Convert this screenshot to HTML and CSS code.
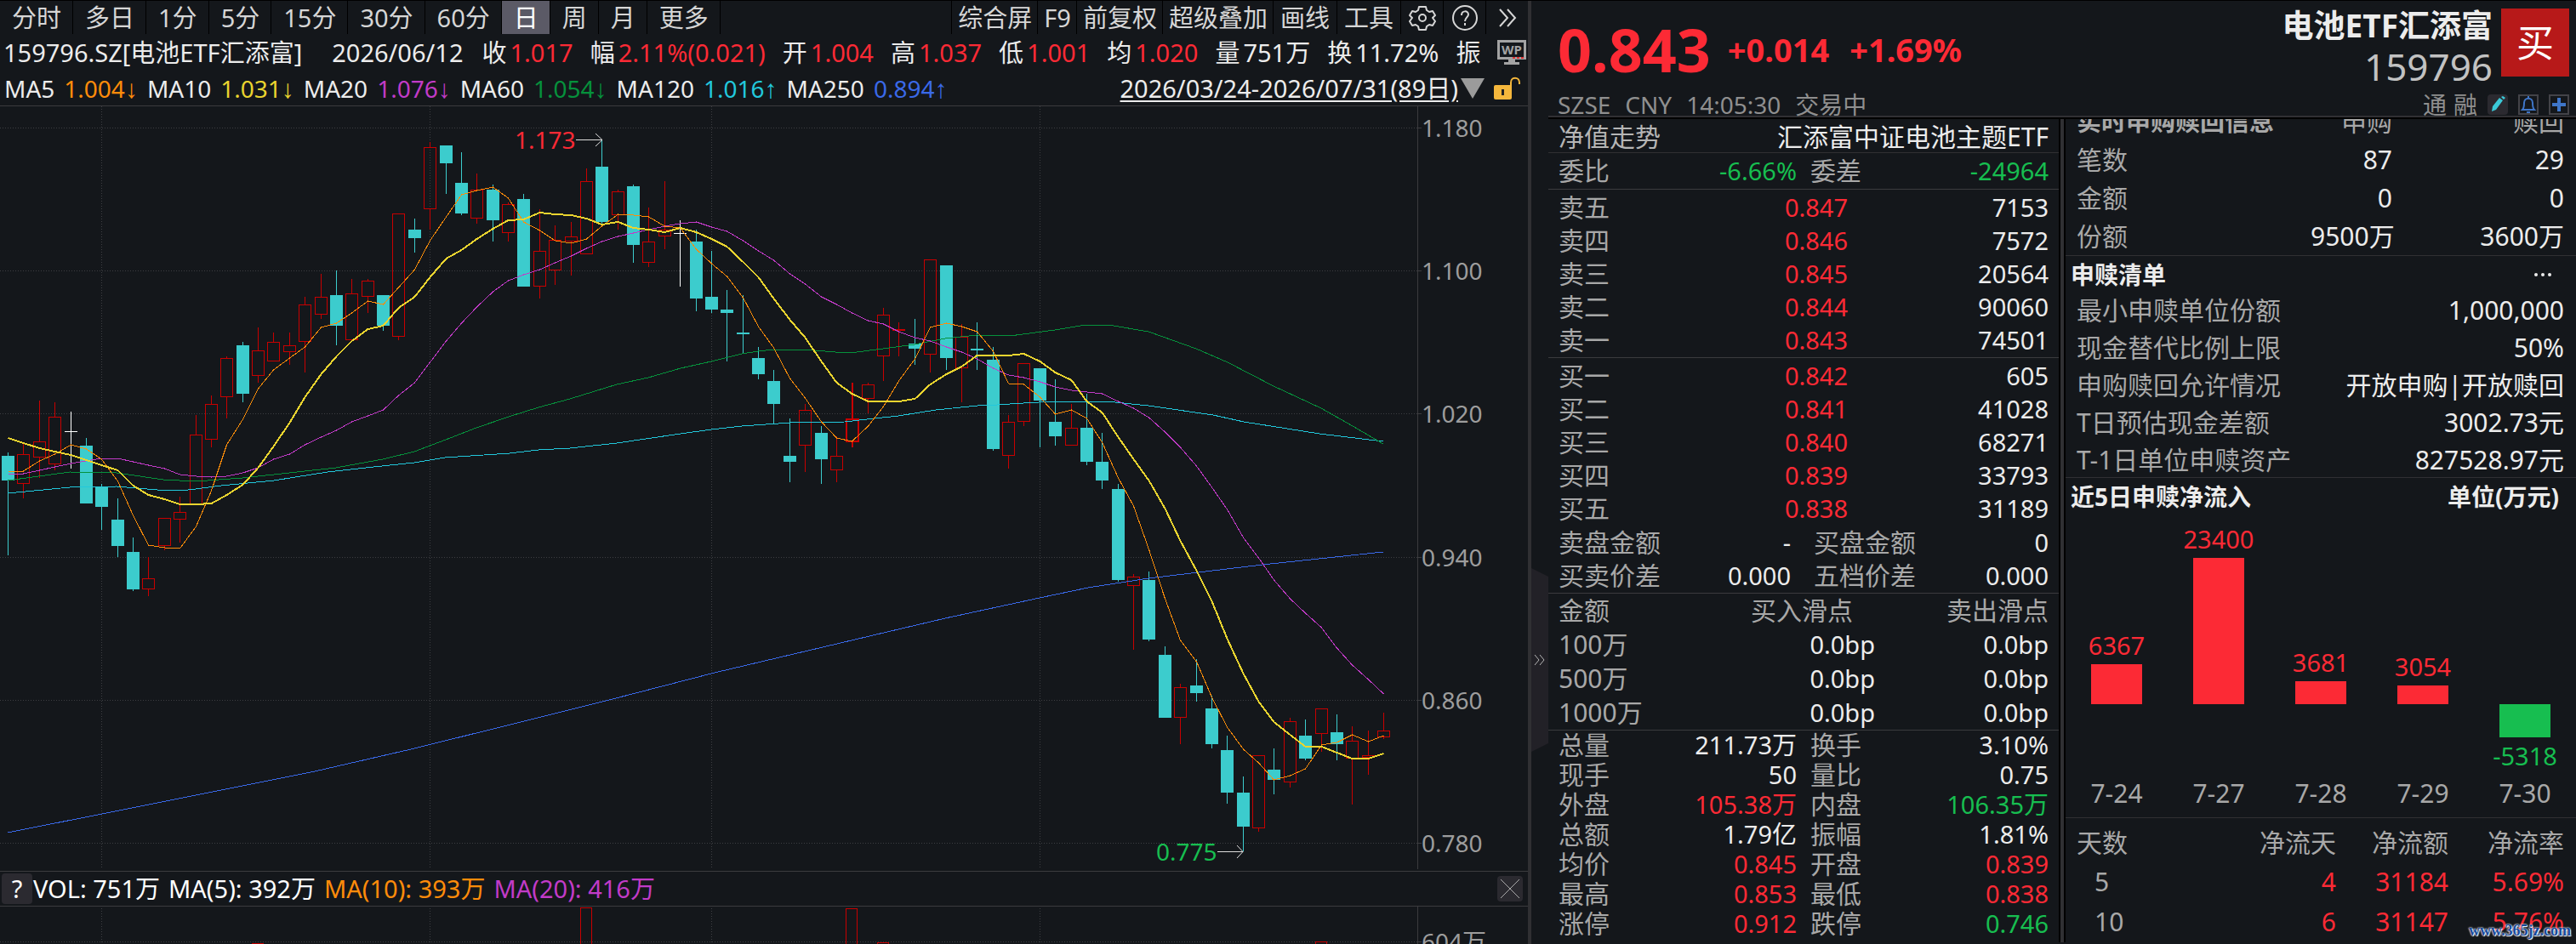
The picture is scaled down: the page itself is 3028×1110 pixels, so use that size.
FILE: index.html
```html
<!DOCTYPE html>
<html lang="zh-CN">
<head>
    <meta charset="UTF-8">
    <meta name="viewport" content="width=device-width, initial-scale=1.0">
    <title>电池ETF汇添富 159796</title>
    <link rel="stylesheet" href="styles.css">
</head>
<body>
    <div class="screen">
        <!-- K线区域 -->
        <main class="chart-panel">
            <nav class="toolbar">
                <div class="periods">
                    <button type="button">分时</button>
                    <button type="button">多日</button>
                    <button type="button">1分</button>
                    <button type="button">5分</button>
                    <button type="button">15分</button>
                    <button type="button">30分</button>
                    <button type="button">60分</button>
                    <button type="button" class="active">日</button>
                    <button type="button">周</button>
                    <button type="button">月</button>
                    <button type="button">更多</button>
                </div>
                <div class="tools">
                    <button type="button">综合屏</button>
                    <button type="button">F9</button>
                    <button type="button">前复权</button>
                    <button type="button">超级叠加</button>
                    <button type="button" class="wide">画线</button>
                    <button type="button" class="wide">工具</button>
                    <button type="button" class="icon-btn" aria-label="设置">
                        <svg width="32" height="32" viewBox="0 0 32 32" fill="none" stroke="currentColor" stroke-width="2" stroke-linejoin="round">
                            <path d="M12 3h8l1 4 3 2 4-1 3 5-3 3 3 4-3 5-4-1-3 2-1 4h-8l-1-4-3-2-4 1-3-5 3-4-3-3 3-5 4 1 3-2z"/>
                            <circle cx="16" cy="16" r="4"/>
                        </svg>
                    </button>
                    <button type="button" class="icon-btn" aria-label="帮助">
                        <svg width="32" height="32" viewBox="0 0 32 32" fill="none" stroke="currentColor" stroke-width="2">
                            <circle cx="16" cy="16" r="14"/>
                            <path d="M12 13c0-6 8-6 8-1 0 3-4 4-4 8M16 22v3"/>
                        </svg>
                    </button>
                    <button type="button" class="icon-btn" aria-label="展开">
                        <svg width="28" height="28" viewBox="0 0 28 28" fill="none" stroke="currentColor" stroke-width="2">
                            <path d="M5 4l9 10-9 10M14 4l9 10-9 10"/>
                        </svg>
                    </button>
                </div>
            </nav>

            <div class="quote-line">
                <span class="security">159796.SZ[电池ETF汇添富]</span>
                <span class="date">2026/06/12</span>
                <span class="field">收<b class="up">1.017</b></span>
                <span class="field">幅<b class="up">2.11%(0.021)</b></span>
                <span class="field">开<b class="up">1.004</b></span>
                <span class="field">高<b class="up">1.037</b></span>
                <span class="field">低<b class="up">1.001</b></span>
                <span class="field">均<b class="up">1.020</b></span>
                <span class="field">量<b>751万</b></span>
                <span class="field">换<b>11.72%</b></span>
                <span class="field">振</span>
                <svg class="wp" width="34" height="32" viewBox="0 0 34 32">
                    <rect x="1.500" y="2.500" width="31" height="20" fill="none" stroke="#a3a3a3" stroke-width="3"/>
                    <path d="M13 24h8v3h5v3H8v-3h5z" fill="#a3a3a3"/>
                    <text x="17" y="18" text-anchor="middle">WP</text>
                    <path d="M18 22h14" stroke="#d33" stroke-width="2" stroke-dasharray="3 2"/>
                </svg>
            </div>

            <div class="ma-line">
                <span>MA5</span><span class="ma5">1.004<i>↓</i></span>
                <span>MA10</span><span class="ma10">1.031<i>↓</i></span>
                <span>MA20</span><span class="ma20">1.076<i>↓</i></span>
                <span>MA60</span><span class="ma60">1.054<i>↓</i></span>
                <span>MA120</span><span class="ma120">1.016<i>↑</i></span>
                <span>MA250</span><span class="ma250">0.894<i>↑</i></span>
                <a class="range" href="#">2026/03/24-2026/07/31(89日)</a>
                <svg class="caret" width="28" height="24" viewBox="0 0 28 24"><path d="M0 0h28L14 24z" fill="#9b9b9b"/></svg>
                <svg class="lock" width="32" height="28" viewBox="0 0 32 28">
                    <path d="M20 12V7c0-7 10-7 10 0v2" fill="none" stroke="#f5b73c" stroke-width="2"/>
                    <rect x="0" y="10" width="21" height="17" rx="2" fill="#f5b73c"/>
                    <path d="M10.500 15v7" stroke="#222" stroke-width="3"/>
                </svg>
            </div>

            <svg id="kline" class="kline" viewBox="0 125 1796 899"></svg>

            <div class="vol-line">
                <button type="button" class="small-btn" aria-label="指标说明">?</button>
                <span>VOL: 751万</span>
                <span>MA(5): 392万</span>
                <span class="ma5">MA(10): 393万</span>
                <span class="ma20">MA(20): 416万</span>
                <button type="button" class="small-btn close" aria-label="关闭">
                    <svg width="24" height="24" viewBox="0 0 24 24" stroke="#aaa" fill="none"><path d="M1 1l22 22M23 1L1 23"/></svg>
                </button>
            </div>
            <svg id="volume" class="volume" viewBox="0 1066 1796 80"></svg>
        </main>

        <!-- 报价区域 -->
        <aside class="side">
            <div class="gutter">
                <button type="button" class="fold" aria-label="收起">
                    <svg width="14" height="14" viewBox="0 0 14 14" fill="none" stroke="#b5b5b5"><path d="M1 1l5 6-5 6M7 1l5 6-5 6"/></svg>
                </button>
            </div>
            <div class="side-body">
                <header class="head">
                    <div class="head-top">
                        <strong class="price">0.843</strong>
                        <strong class="change">+0.014</strong>
                        <strong class="change">+1.69%</strong>
                        <div class="name">
                            <h1>电池ETF汇添富</h1>
                            <span>159796</span>
                        </div>
                        <button type="button" class="buy">买</button>
                    </div>
                    <div class="head-sub">
                        <span>SZSE</span><span>CNY</span><span>14:05:30</span><span>交易中</span>
                        <div class="tags">
                            <span>通</span><span>融</span>
                            <button type="button" class="tag-btn edit" aria-label="编辑">
                                <svg width="24" height="24" viewBox="0 0 24 24"><path d="M14 4l4 3-8 11-5 2 1-6zM16 3l2-1 3 2-2 2z" fill="#3bc9d8"/></svg>
                            </button>
                            <button type="button" class="tag-btn" aria-label="提醒">
                                <svg width="24" height="24" viewBox="0 0 24 24" fill="none" stroke="#3f76c8" stroke-width="2"><path d="M5 18c2-2 2-4 2-8 0-7 10-7 10 0 0 4 0 6 2 8zM10 21h4M12 2v3"/></svg>
                            </button>
                            <button type="button" class="tag-btn" aria-label="添加">
                                <svg width="24" height="24" viewBox="0 0 24 24" stroke="#3f76c8" stroke-width="4"><path d="M12 4v16M4 12h16"/></svg>
                            </button>
                        </div>
                    </div>
                </header>

                <div class="columns">
                    <section class="book">
                        <div class="nav-row"><span>净值走势</span><a href="#">汇添富中证电池主题ETF</a></div>
                        <table class="pairs ratio">
                            <tr><th>委比</th><td class="down">-6.66%</td><th>委差</th><td class="down">-24964</td></tr>
                        </table>
                        <table class="orders">
                            <tr><th>卖五</th><td class="up">0.847</td><td>7153</td></tr>
                            <tr><th>卖四</th><td class="up">0.846</td><td>7572</td></tr>
                            <tr><th>卖三</th><td class="up">0.845</td><td>20564</td></tr>
                            <tr><th>卖二</th><td class="up">0.844</td><td>90060</td></tr>
                            <tr><th>卖一</th><td class="up">0.843</td><td>74501</td></tr>
                        </table>
                        <table class="orders bids">
                            <tr><th>买一</th><td class="up">0.842</td><td>605</td></tr>
                            <tr><th>买二</th><td class="up">0.841</td><td>41028</td></tr>
                            <tr><th>买三</th><td class="up">0.840</td><td>68271</td></tr>
                            <tr><th>买四</th><td class="up">0.839</td><td>33793</td></tr>
                            <tr><th>买五</th><td class="up">0.838</td><td>31189</td></tr>
                        </table>
                        <table class="pairs spread">
                            <tr><th>卖盘金额</th><td>-</td><th>买盘金额</th><td>0</td></tr>
                            <tr><th>买卖价差</th><td>0.000</td><th>五档价差</th><td>0.000</td></tr>
                        </table>
                        <table class="slip">
                            <tr><th>金额</th><th class="buy-slip">买入滑点</th><th>卖出滑点</th></tr>
                            <tr><th>100万</th><td>0.0bp</td><td>0.0bp</td></tr>
                            <tr><th>500万</th><td>0.0bp</td><td>0.0bp</td></tr>
                            <tr><th>1000万</th><td>0.0bp</td><td>0.0bp</td></tr>
                        </table>
                        <table class="pairs stats">
                            <tr><th>总量</th><td>211.73万</td><th>换手</th><td>3.10%</td></tr>
                            <tr><th>现手</th><td>50</td><th>量比</th><td>0.75</td></tr>
                            <tr><th>外盘</th><td class="up">105.38万</td><th>内盘</th><td class="down">106.35万</td></tr>
                            <tr><th>总额</th><td>1.79亿</td><th>振幅</th><td>1.81%</td></tr>
                            <tr><th>均价</th><td class="up">0.845</td><th>开盘</th><td class="up">0.839</td></tr>
                            <tr><th>最高</th><td class="up">0.853</td><th>最低</th><td class="up">0.838</td></tr>
                            <tr><th>涨停</th><td class="up">0.912</td><th>跌停</th><td class="down">0.746</td></tr>
                        </table>
                    </section>

                    <div class="divider"></div>

                    <section class="fund">
                        <table class="realtime">
                            <tr><th class="title">实时申购赎回信息</th><th>申购</th><th>赎回</th></tr>
                            <tr><th>笔数</th><td>87</td><td>29</td></tr>
                            <tr><th>金额</th><td>0</td><td>0</td></tr>
                            <tr><th>份额</th><td>9500万</td><td>3600万</td></tr>
                        </table>
                        <div class="block">
                            <div class="block-title"><h2>申赎清单</h2><button type="button" class="more" aria-label="更多">
                                <svg width="20" height="4" viewBox="0 0 20 4" fill="#ececec"><circle cx="2" cy="2" r="2"/><circle cx="10" cy="2" r="2"/><circle cx="18" cy="2" r="2"/></svg>
                            </button></div>
                            <table class="list">
                                <tr><th>最小申赎单位份额</th><td>1,000,000</td></tr>
                                <tr><th>现金替代比例上限</th><td>50%</td></tr>
                                <tr><th>申购赎回允许情况</th><td>开放申购|开放赎回</td></tr>
                                <tr><th>T日预估现金差额</th><td>3002.73元</td></tr>
                                <tr><th>T-1日单位申赎资产</th><td>827528.97元</td></tr>
                            </table>
                        </div>
                        <div class="block">
                            <div class="block-title"><h2>近5日申赎净流入</h2><h2>单位(万元)</h2></div>
                            <div id="flow" class="flow"></div>
                        </div>
                        <table class="days">
                            <tr><th>天数</th><th>净流天</th><th>净流额</th><th>净流率</th></tr>
                            <tr><th>5</th><td>4</td><td>31184</td><td>5.69%</td></tr>
                            <tr><th>10</th><td>6</td><td>31147</td><td>5.76%</td></tr>
                        </table>
                        <span class="site">www.365jz.com</span>
                    </section>
                </div>
            </div>
        </aside>
    </div>

    <script>
        var STEP = 18.375;
        var FIRST = 9.5;

        // 类型, 实体上沿, 实体下沿, 最高, 最低 (u 阳线, d 阴线, w 十字星)
        var candles = [
            ['d',536,565,532,653],['u',534,568,522,586],['u',519,537,471,562],['u',490,545,473,553],
            ['w',507,507,484,551],['d',524,592,515,592],['d',572,596,569,623],['d',611,642,586,655],
            ['d',649,693,632,695],['u',680,692,655,701],['u',609,641,609,647],['u',602,610,584,638],
            ['u',511,592,488,592],['u',475,516,465,526],['u',421,466,419,492],['d',406,463,402,473],
            ['u',412,441,385,450],['u',402,424,391,424],['u',406,413,391,429],['u',358,401,349,438],
            ['u',349,369,322,375],['d',347,383,318,406],['u',345,399,328,399],['u',330,348,328,368],
            ['d',347,383,347,389],['u',251,395,251,400],['d',270,280,257,297],['u',173,245,167,270],
            ['d',171,192,171,228],['d',215,251,179,253],['u',223,256,204,263],['d',223,259,217,284],
            ['u',240,273,238,284],['d',234,337,228,337],['u',295,336,246,351],['u',282,317,265,335],
            ['u',278,283,261,324],['u',213,298,198,298],['d',196,261,164,265],['u',225,252,223,270],
            ['d',219,288,217,309],['u',284,308,244,314],['u',270,277,213,293],['w',274,274,259,337],
            ['d',284,351,270,366],['d',349,364,295,368],['d',364,368,341,425],['d',391,393,347,416],
            ['d',421,440,408,446],['d',448,475,435,498],['d',536,543,492,567],['u',482,523,475,555],
            ['d',509,540,501,569],['u',536,552,513,567],['x',492,518,450,526],['u',452,468,450,486],
            ['u',370,418,362,448],['u',387,388,379,419],['d',404,410,375,429],['u',305,416,305,438],
            ['d',312,421,312,435],['u',396,432,381,473],['d',410,412,379,435],['d',423,528,408,530],
            ['u',496,535,488,551],['u',427,495,427,501],['d',433,471,433,526],['d',496,513,446,524],
            ['u',503,523,475,523],['d',503,543,463,547],['d',543,565,509,575],['d',575,682,569,684],
            ['u',678,688,675,764],['d',682,752,672,754],['d',770,844,760,844],['u',808,843,804,875],
            ['d',806,815,775,825],['d',833,875,818,880],['d',882,932,865,945],['d',932,972,913,1001],
            ['u',888,973,888,978],['d',905,917,880,934],['u',848,919,844,926],['d',865,892,846,894],
            ['u',833,862,833,884],['d',861,875,840,894],['u',871,891,854,946],['u',888,890,859,911],
            ['u',859,866,838,869]
        ];

        // 每根K线一个点
        var ma5 = [554,554,542,534,523,528,540,566,606,641,644,645,619,577,523,493,457,435,421,408,385,380,368,354,358,338,317,283,255,229,224,220,233,261,271,283,286,281,266,252,253,255,266,268,293,310,325,350,384,409,445,468,496,515,519,501,478,448,422,385,380,384,390,413,451,452,467,487,482,492,520,562,595,646,704,753,778,820,855,881,897,917,912,904,876,873,864,872,865];
        var ma10 = [515,521,527,531,535,541,547,553,571,582,587,593,593,592,582,570,550,525,497,467,440,419,401,387,383,362,349,326,304,294,281,269,259,258,250,252,253,257,264,261,268,270,273,268,273,281,290,308,326,351,376,397,425,450,463,472,472,472,469,452,440,431,418,418,418,416,425,438,447,472,485,514,540,565,598,636,671,707,751,792,825,849,864,878,878,885,892,892,886];
        var ma20 = [557,557,553,549,545,542,539,539,543,547,551,558,560,561,560,556,550,540,534,523,514,506,496,489,482,465,450,426,401,380,361,343,330,323,317,309,301,292,284,278,274,270,266,263,261,267,272,283,295,306,322,334,349,358,368,377,381,390,397,401,408,414,422,433,441,444,449,455,459,461,463,472,480,491,508,526,548,573,599,632,656,682,704,721,738,762,782,799,816];

        // 长周期均线, x,y 折线
        var ma60 = '9,565 82,555 137,556 192,564 230,566 285,562 340,556 395,550 450,540 487,531 524,517 560,503 598,490 633,479 670,469 725,452 762,444 800,433 836,425 872,416 891,413 909,411 946,411 982,414 1007,414 1038,410 1075,405 1111,398 1148,394 1187,395 1240,388 1276,382 1303,382 1350,390 1406,410 1443,426 1497,454 1553,480 1590,501 1626,522';
        var ma120 = '9,580 82,573 137,572 185,576 212,577 230,575 260,571 322,565 385,555 430,550 487,544 523,538 599,533 633,529 670,527 725,521 800,510 836,505 872,501 929,497 993,496 1019,493 1056,489 1100,482 1149,477 1172,476 1203,474 1240,472 1301,472 1350,477 1426,488 1462,496 1551,510 1626,519';
        var ma250 = '9,979 130,955 250,931 370,907 483,881 600,852 720,822 840,791 950,765 1060,739 1111,727 1185,711 1222,703 1279,691 1350,680 1484,664 1626,649';

        function cx(i) {
            return Math.round(FIRST + STEP * i - 0.5) + 0.5;
        }

        function seriesPoints(values) {
            return values.map(function(y, i) { return cx(i) + ',' + y; }).join(' ');
        }

        function line(cls, points) {
            return '<polyline class="line ' + cls + '" points="' + points + '"/>';
        }

        function path(cls, d) {
            return '<path class="' + cls + '" d="' + d + '"/>';
        }

        function drawKline() {
            var out = '';
            var levels = [[150, '1.180'], [318, '1.100'], [486, '1.020'], [655, '0.940'], [823, '0.860'], [991, '0.780']];
            levels.forEach(function(l) {
                out += path('grid', 'M0 ' + (l[0] + 0.5) + 'H1666');
                out += path('axis', 'M1666 ' + (l[0] + 0.5) + 'h5');
                out += '<text class="label" x="1671" y="' + (l[0] + 11) + '">' + l[1] + '</text>';
            });
            [119, 505, 836, 1222].forEach(function(x) {
                out += path('grid', 'M' + (x + 0.5) + ' 125V1022');
            });
            out += path('axis', 'M1666.5 125V1022');

            candles.forEach(function(c, i) {
                var x = cx(i), top = c[1] + 0.5, bottom = c[2] + 0.5;
                if (c[0] === 'd') {
                    out += path('wick-down', 'M' + x + ' ' + c[3] + 'V' + c[4]);
                    out += '<rect class="body-down" x="' + (x - 7.5) + '" y="' + c[1] + '" width="15" height="' + (c[2] - c[1]) + '"/>';
                } else if (c[0] === 'w') {
                    out += path('doji', 'M' + x + ' ' + c[3] + 'V' + c[4] + 'M' + (x - 7.5) + ' ' + top + 'h15');
                } else {
                    var cls = c[0] === 'x' ? 'candle-up bold' : 'candle-up';
                    out += path(cls, 'M' + x + ' ' + c[3] + 'V' + top + 'M' + x + ' ' + bottom + 'V' + c[4] +
                        'M' + (x - 7) + ' ' + top + 'h14V' + bottom + 'h-14z');
                }
            });

            out += line('ma250', ma250) + line('ma120', ma120) + line('ma60', ma60);
            out += line('ma20', seriesPoints(ma20)) + line('ma5', seriesPoints(ma5)) + line('ma10 bold', seriesPoints(ma10));

            // 最高价与最低价标注
            out += '<text class="label high" x="605" y="175">1.173</text>';
            out += path('arrow', 'M677 164.5h31M700 157l8 7.500-8 7.500');
            out += '<text class="label low" x="1359" y="1012">0.775</text>';
            out += path('arrow', 'M1431 1001.500h30M1454 994l7 7.500-7 7.500');
            document.getElementById('kline').innerHTML = out;
        }

        function drawVolume() {
            var out = path('grid', 'M0 1107.500H1666') + path('axis', 'M1666.500 1066V1146M1666 1107.500h5');
            [119, 505, 836, 1222].forEach(function(x) {
                out += path('grid', 'M' + (x + 0.5) + ' 1068V1146');
            });
            [[16, 1109], [37, 1067], [54, 1068], [56, 1108], [84, 1107]].forEach(function(v) {
                out += path('candle-up', 'M' + (cx(v[0]) - 7) + ' 1146V' + (v[1] + 0.5) + 'h13V1146');
            });
            out += '<text class="label" x="1671" y="1118">604万</text>';
            document.getElementById('volume').innerHTML = out;
        }

        // 近5日净流入柱状图
        var flows = [['7-24', 6367], ['7-27', 23400], ['7-28', 3681], ['7-29', 3054], ['7-30', -5318]];

        function drawFlow() {
            document.getElementById('flow').innerHTML = flows.map(function(f) {
                var h = Math.round(Math.abs(f[1]) * 172 / 23400);
                var cls = f[1] < 0 ? 'neg' : 'pos';
                return '<div class="flow-day ' + cls + '"><div class="plot"><b>' + f[1] + '</b><div class="bar" style="height:' + h + 'px"></div></div><span>' + f[0] + '</span></div>';
            }).join('');
        }

        drawKline();
        drawVolume();
        drawFlow();
    </script>
</body>
</html>
```
FILE: styles.css
```css
* {
    box-sizing: border-box;
}
body {
    margin: 0;
    height: 100vh;
    overflow: hidden;
    background-color: #14171b;
    color: #ececec;
    font-family: "Noto Sans", "Noto Sans CJK SC", sans-serif;
    font-size: 29px;
    line-height: 32px;
    white-space: nowrap;
}
button {
    font: inherit;
    color: inherit;
    background: none;
    border: none;
    padding: 0;
    margin: 0;
    cursor: pointer;
}
svg {
    display: block;
    flex: none;
}
h1, h2 {
    margin: 0;
}
a {
    color: inherit;
}
table {
    width: 100%;
    border-collapse: collapse;
    table-layout: fixed;
}
th, td {
    padding: 0;
    font-weight: normal;
    text-align: right;
}
th {
    color: #a8a8a8;
}
th:first-child {
    text-align: left;
}
.up {
    color: #fc2a35;
}
.down {
    color: #17be50;
}
.screen {
    display: grid;
    grid-template-columns: minmax(0, 449fr) minmax(0, 308fr);
    height: 100%;
    border-top: 1px solid #000;
}

/* 左侧图表 */
.chart-panel {
    overflow: hidden;
}
.toolbar {
    display: flex;
    justify-content: space-between;
    height: 39px;
    color: #d6d6d6;
}
.periods, .tools {
    display: flex;
}
.periods button {
    padding: 0 13px 0 14px;
    border-right: 1px solid #000;
}
.periods button.active {
    background-color: #5b5a66;
    color: #fff;
}
.tools button {
    padding: 0 6px 0 7px;
    border-left: 1px solid #000;
}
.tools .wide {
    padding: 0 8px;
}
.tools .icon-btn {
    display: flex;
    align-items: center;
    justify-content: center;
    width: 50px;
    padding: 0;
}
.quote-line {
    display: flex;
    align-items: center;
    height: 44px;
    padding-left: 4px;
}
.security {
    margin-right: 35px;
}
.date {
    margin-right: 22px;
}
.field {
    display: flex;
    gap: 4px;
    margin-right: 20px;
}
.field b {
    font-weight: normal;
}
.wp {
    margin-left: auto;
    margin-right: 4px;
}
.wp text {
    font-size: 15px;
    font-weight: bold;
    fill: #a3a3a3;
}
.ma-line {
    display: flex;
    align-items: center;
    gap: 11px;
    height: 41px;
    padding-left: 5px;
    border-bottom: 1px solid #3b3b3e;
    font-size: 28px;
}
.ma-line i {
    font-family: "Liberation Sans", sans-serif;
    font-size: 30px;
    font-style: normal;
    line-height: 24px;
}
.ma5 { color: #ff8c0a; stroke: #ff8c0a; }
.ma10 { color: #ead42f; stroke: #ead42f; }
.ma20 { color: #c23bc8; stroke: #c23bc8; }
.ma60 { color: #06913c; stroke: #06913c; }
.ma120 { color: #22c8dc; stroke: #22c8dc; }
.ma250 { color: #3a69e8; stroke: #3a69e8; }
.range {
    margin-left: auto;
    margin-right: -8px;
    font-size: 29px;
    text-underline-offset: 3px;
}
.lock {
    margin-right: 8px;
}
.kline, .volume {
    width: 100%;
    height: auto;
}
.line {
    fill: none;
    stroke-width: 1;
    shape-rendering: crispEdges;
}
.line.bold {
    stroke-width: 2;
}
.grid {
    stroke: #3d3e42;
    stroke-dasharray: 1 2;
    fill: none;
    shape-rendering: crispEdges;
}
.axis {
    stroke: #3b3b3e;
    fill: none;
    shape-rendering: crispEdges;
}
.label {
    font-size: 28px;
    fill: #9d9d9d;
}
.label.high {
    fill: #fc2a35;
}
.label.low {
    fill: #17be50;
}
.wick-down {
    stroke: #3ccccd;
    shape-rendering: crispEdges;
}
.body-down {
    fill: #3ccccd;
    shape-rendering: crispEdges;
}
.candle-up {
    stroke: #c80000;
    fill: none;
    shape-rendering: crispEdges;
}
.candle-up.bold {
    stroke-width: 2;
}
.doji {
    stroke: #fff;
    shape-rendering: crispEdges;
}
.arrow {
    stroke: #ddd;
    fill: none;
}
.vol-line {
    display: flex;
    align-items: center;
    gap: 10px;
    height: 42px;
    padding: 0 6px 0 2px;
    border-top: 1px solid #3b3b3e;
    border-bottom: 1px solid #3b3b3e;
    color: #fff;
}
.vol-line .ma5 {
    color: #ff8c0a;
}
.vol-line .ma20 {
    color: #c23bc8;
}
.vol-line span {
    stroke: none;
}
.small-btn {
    width: 36px;
    height: 36px;
    margin-right: -9px;
    border-radius: 4px;
    background-color: #2b2a30;
}
.small-btn.close {
    display: flex;
    align-items: center;
    justify-content: center;
    width: 30px;
    height: 30px;
    margin-left: auto;
    margin-right: 0;
}

/* 右侧报价 */
.side {
    display: flex;
    overflow: hidden;
}
.gutter {
    flex: none;
    width: 24px;
    padding-top: 667px;
    border-left: 4px solid #303033;
}
.fold {
    display: flex;
    align-items: center;
    justify-content: center;
    width: 20px;
    height: 216px;
    background-color: #222127;
    clip-path: polygon(0 0, 100% 10px, 100% 206px, 0 100%);
}
.side-body {
    flex: 1;
    min-width: 0;
}
.head {
    height: 139px;
    overflow: hidden;
    border-bottom: 2px solid #000;
    box-shadow: inset 0 -2px #303033;
}
.head-top {
    display: flex;
    align-items: center;
    height: 106px;
    padding: 0 8px 0 11px;
}
.price {
    margin-right: 20px;
    padding-top: 7px;
    font-size: 70px;
    line-height: 96px;
    color: #fc2a35;
}
.change {
    margin-right: 24px;
    padding-top: 7px;
    font-size: 38px;
    line-height: 48px;
    color: #fc2a35;
}
.name {
    margin-left: auto;
    margin-right: 10px;
    text-align: right;
}
.name h1 {
    font-size: 37px;
    line-height: 48px;
}
.name span {
    display: block;
    font-size: 44px;
    line-height: 48px;
    color: #c2c2c2;
}
.buy {
    width: 80px;
    height: 80px;
    margin-bottom: 8px;
    background-color: #b71919;
    color: #fff;
    font-size: 44px;
}
.head-sub {
    display: flex;
    gap: 17px;
    padding: 0 8px 0 11px;
    font-size: 28px;
    color: #8f8f8f;
}
.tags {
    display: flex;
    gap: 8px;
    margin-left: auto;
}
.tag-btn {
    width: 24px;
    height: 24px;
    margin-top: 4px;
    margin-left: 4px;
    box-shadow: inset 0 0 0 2px #434348;
}
.tag-btn.edit {
    background-color: #2b2a30;
    box-shadow: none;
    border-radius: 4px;
}
.columns {
    display: grid;
    grid-template-columns: minmax(0, 1fr) 8px minmax(0, 1fr);
}
.divider {
    background-color: #303033;
    border: solid #000;
    border-width: 0 2px;
}
.nav-row {
    display: flex;
    align-items: center;
    justify-content: space-between;
    height: 40px;
    padding: 2px 12px 0;
    border-bottom: 1px solid #303033;
    font-size: 30px;
}
.nav-row span {
    color: #b5b5b5;
}
.nav-row a {
    text-decoration: none;
}
.book table {
    border-bottom: 1px solid #3b3b3e;
}
.book th {
    font-size: 30px;
}
.book th:first-child {
    padding-left: 12px;
}
.book td:last-child, .book th:last-child {
    padding-right: 12px;
}
.pairs th:nth-child(3) {
    width: 21%;
    padding-left: 14px;
    text-align: left;
}
.pairs th:first-child {
    width: 23%;
}
.pairs td:nth-child(2) {
    width: 26%;
}
.pairs td:nth-child(2) {
    padding-right: 2px;
}
.ratio tr {
    height: 42px;
}
.orders {
    border-collapse: separate;
    border-spacing: 0;
    padding: 2px 0 0;
}
.orders th {
    width: 20%;
}
.orders td:nth-child(2) {
    width: 39%;
    padding-right: 2px;
}
.orders tr {
    height: 39px;
}
.book .bids {
    border-bottom: none;
}
.pairs.spread td:nth-child(2) {
    padding-right: 9px;
}
.pairs.spread th:nth-child(3) {
    width: 25%;
    padding-left: 18px;
}
.spread tr, .slip tr {
    height: 40px;
}
.slip th:nth-child(2), .slip td:nth-child(2) {
    width: 32%;
}
.slip th:nth-child(3), .slip td:nth-child(3) {
    width: 36%;
}
.slip .buy-slip {
    padding-right: 26px;
}
.book .stats {
    border-bottom: none;
}
.stats tr {
    height: 35px;
}

/* 申赎信息 */
.fund {
    position: relative;
    overflow: hidden;
    font-size: 30px;
}
.fund table th:first-child {
    padding-left: 13px;
}
.fund table td:last-child, .fund table th:last-child {
    padding-right: 14px;
}
.realtime {
    margin-top: -20px;
}
.realtime tr {
    height: 45px;
}
.realtime .title {
    width: 48%;
    font-size: 29px;
    font-weight: bold;
}
.realtime th:nth-child(2) {
    width: 16%;
}
.block {
    border-top: 1px solid #303033;
}
.block-title {
    display: flex;
    align-items: center;
    justify-content: space-between;
    height: 42px;
    padding: 2px 20px 0 6px;
}
.block-title h2 {
    font-size: 28px;
    line-height: 32px;
}
.more {
    margin-right: 9px;
}
.list {
    margin-bottom: -2px;
}
.list tr {
    height: 44px;
}
.list th {
    width: 50%;
}
.flow {
    display: grid;
    grid-template-columns: repeat(5, 1fr);
    padding-bottom: 8px;
    text-align: center;
}
.plot {
    display: flex;
    flex-direction: column;
    justify-content: flex-end;
    align-items: center;
    gap: 6px;
    height: 224px;
}
.plot b {
    font-size: 29px;
    font-weight: normal;
    color: #fc2a35;
}
.bar {
    width: 60px;
    background-color: #fc2a35;
}
.neg .plot {
    flex-direction: column-reverse;
    height: 287px;
    padding-top: 224px;
    justify-content: flex-end;
}
.neg .plot b {
    color: #17be50;
}
.neg .bar {
    flex: none;
    background-color: #17be50;
}
.pos .plot {
    margin-bottom: 63px;
}
.flow-day span {
    display: block;
    height: 62px;
    line-height: 84px;
    color: #a8a8a8;
}
.days {
    border-top: 1px solid #303033;
}
.days tr {
    height: 47px;
}
.days tr:first-child th {
    height: 52px;
    padding-top: 6px;
}
.days th:first-child {
    width: 36%;
    padding-left: 16px;
}
.days tr + tr th:first-child {
    padding-left: 34px;
}
.days th:nth-child(2) {
    width: 17%;
}
.days th:nth-child(3) {
    width: 22%;
}
.days td {
    color: #fc2a35;
}
.site {
    position: absolute;
    right: 6px;
    bottom: 2px;
    font-family: "Liberation Serif", serif;
    font-size: 18px;
    font-weight: bold;
    line-height: 24px;
    color: #16499a;
    text-shadow: 0 0 2px #fff, 0 0 2px #fff, 1px 1px 1px #fff;
}
```
